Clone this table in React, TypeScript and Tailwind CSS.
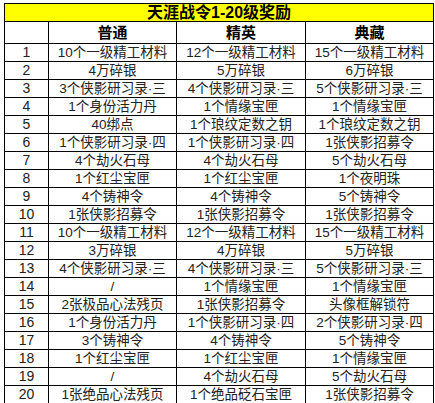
const rows: [string, string, string][] = [
  ["10个一级精工材料", "12个一级精工材料", "15个一级精工材料"],
  ["4万碎银", "5万碎银", "6万碎银"],
  ["3个侠影研习录·三", "4个侠影研习录·三", "5个侠影研习录·三"],
  ["1个身份活力丹", "1个情缘宝匣", "1个情缘宝匣"],
  ["40绑点", "1个琅纹定数之钥", "1个琅纹定数之钥"],
  ["1个侠影研习录·四", "1个侠影研习录·四", "1张侠影招募令"],
  ["4个劫火石母", "4个劫火石母", "5个劫火石母"],
  ["1个红尘宝匣", "1个红尘宝匣", "1个夜明珠"],
  ["4个铸神令", "4个铸神令", "5个铸神令"],
  ["1张侠影招募令", "1张侠影招募令", "1张侠影招募令"],
  ["10个一级精工材料", "12个一级精工材料", "15个一级精工材料"],
  ["3万碎银", "4万碎银", "5万碎银"],
  ["4个侠影研习录·三", "4个侠影研习录·三", "5个侠影研习录·三"],
  ["/", "1个情缘宝匣", "1个情缘宝匣"],
  ["2张极品心法残页", "1张侠影招募令", "头像框解锁符"],
  ["1个身份活力丹", "1个侠影研习录·四", "2个侠影研习录·四"],
  ["3个铸神令", "4个铸神令", "5个铸神令"],
  ["1个红尘宝匣", "1个红尘宝匣", "1个情缘宝匣"],
  ["/", "4个劫火石母", "5个劫火石母"],
  ["1张绝品心法残页", "1个绝品砭石宝匣", "1张侠影招募令"],
];

const font = { fontFamily: '"Liberation Sans", "Noto Sans CJK SC", sans-serif' };

export default function App() {
  return (
    <div className="w-[435px] h-[403px] overflow-hidden bg-white pt-[3px] pl-[4px]" style={font}>
      <table className="border-collapse table-fixed w-[429px] text-[#222]">
        <colgroup>
          <col className="w-[44px]" />
          <col className="w-[128px]" />
          <col className="w-[129px]" />
          <col className="w-[128px]" />
        </colgroup>
        <tbody>
          <tr className="h-[18px]">
            <td colSpan={4} className="border border-black bg-[#ffff00] p-0 text-center text-[16px] font-bold leading-[17px] text-black">
              天涯战令1-20级奖励
            </td>
          </tr>
          <tr className="h-[22px]">
            <td className="border border-black p-0" />
            <td className="border border-black p-0 text-center text-[15px] font-bold leading-[21px] text-black">普通</td>
            <td className="border border-black p-0 text-center text-[15px] font-bold leading-[21px] text-black">精英</td>
            <td className="border border-black p-0 text-center text-[15px] font-bold leading-[21px] text-black">典藏</td>
          </tr>
          {rows.map((r, i) => (
            <tr key={i} className="h-[18px]">
              <td className="border border-black p-0 text-center text-[14px] leading-[17px]">{i + 1}</td>
              {r.map((c, j) => (
                <td key={j} className="border border-black p-0 text-center text-[13.5px] leading-[17px] whitespace-nowrap">
                  {c}
                </td>
              ))}
            </tr>
          ))}
        </tbody>
      </table>
    </div>
  );
}
